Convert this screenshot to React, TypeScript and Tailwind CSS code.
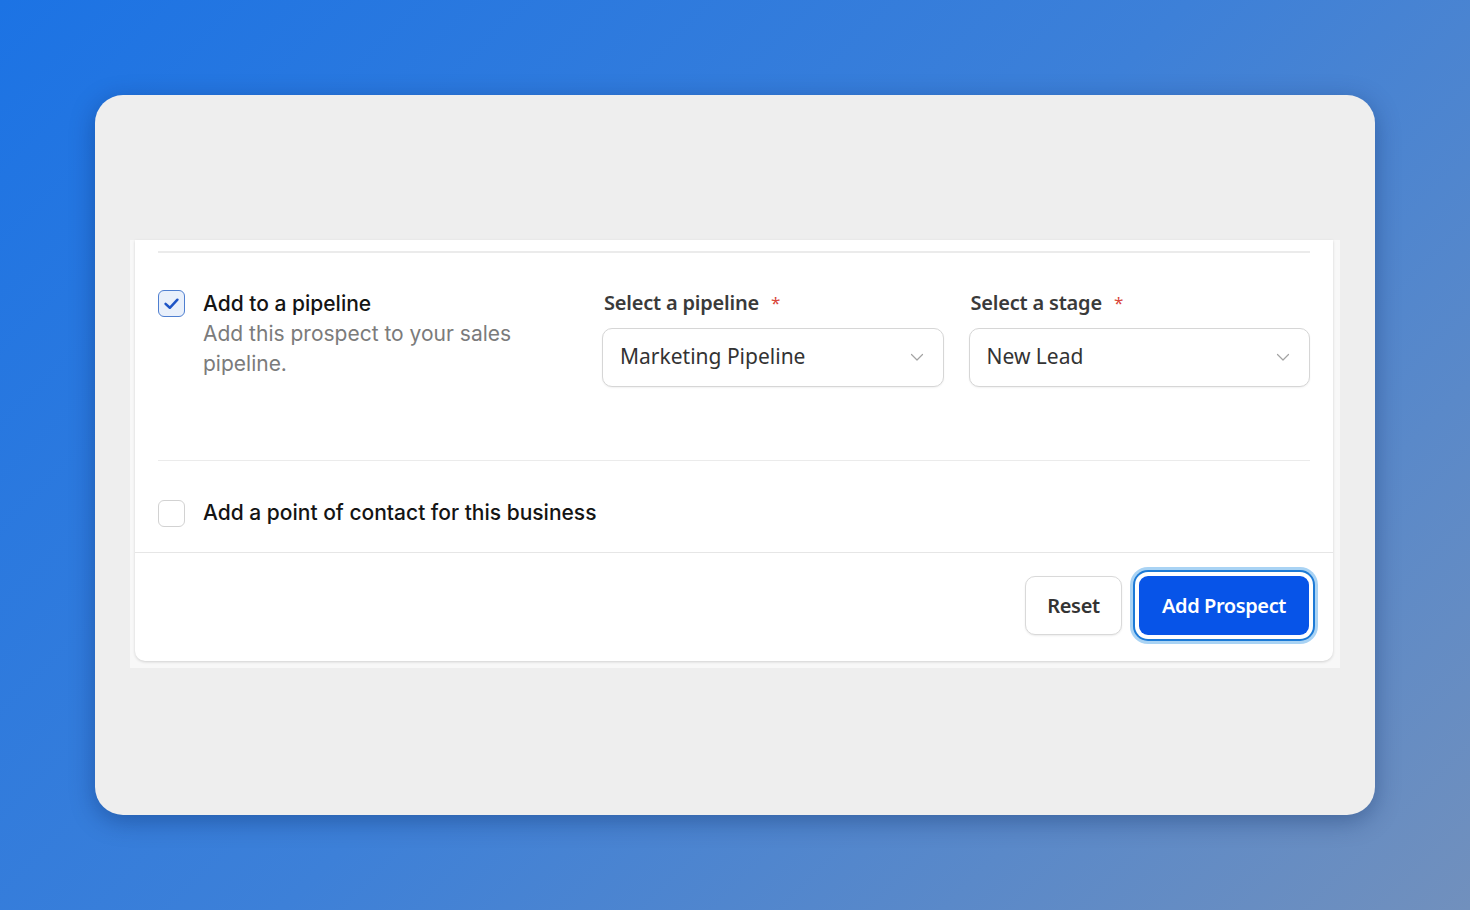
import React from "react";

function Chevron() {
  return (
    <svg width="16" height="16" viewBox="0 0 16 16" fill="none" className="shrink-0">
      <path d="M2.5 5.5 L8 11 L13.5 5.5" stroke="#a3a3a3" strokeWidth="1.2" strokeLinecap="round" strokeLinejoin="round" />
    </svg>
  );
}

function SelectField({ label, value }: { label: string; value: string }) {
  return (
    <div className="flex flex-col gap-[10px]">
      <div className="flex items-center h-[30px] pl-[2px] text-[20px] font-semibold text-[#3a3a3a] font-['Noto_Sans',sans-serif] tracking-[-0.2px]">
        <span>{label}</span>
        <span className="ml-[12px] text-[#d9473a] text-[17px] font-normal">*</span>
      </div>
      <div className="h-[59px] rounded-[10px] border-[1.5px] border-[#d6d6d6] bg-white shadow-[0_1px_2px_rgba(0,0,0,0.06)] flex items-center justify-between pl-[17px] pr-[18px]">
        <span className="text-[21px] text-[#333] font-['Noto_Sans',sans-serif]">{value}</span>
        <Chevron />
      </div>
    </div>
  );
}

export default function App() {
  return (
    <div className="w-[1470px] h-[910px] bg-[linear-gradient(135deg,#1c73e4_0%,#3d80d8_50%,#7190bd_100%)] p-[95px] font-['Inter',sans-serif]">
      <div className="w-full h-full rounded-[28px] bg-[#eeeeee] shadow-[0_6px_24px_rgba(0,30,80,0.35)] pt-[145px] px-[35px]">
        <div className="bg-[#f8f8f8] pl-[5px] pr-[7px] pb-[7px]">
          <div className="bg-white rounded-b-[10px] shadow-[0_1px_3px_rgba(0,0,0,0.16)]">
            <div className="px-[23px] pt-[11px]">
              <div className="h-[1.5px] bg-[#ebebeb]" />
              <div className="flex pt-[35px] pb-[73px]">
                <div className="w-[444px] flex gap-[18px] pt-[1px]">
                  <div className="mt-[1px] w-[27px] h-[27px] rounded-[6px] border-[1.5px] border-[#4f7fd0] bg-[#e9f0fb] flex items-center justify-center shrink-0">
                    <svg width="19" height="19" viewBox="0 0 16 16" fill="none">
                      <path d="M3 8.3 L6.6 11.6 L13 4.8" stroke="#1f55c6" strokeWidth="2.1" strokeLinecap="round" strokeLinejoin="round" />
                    </svg>
                  </div>
                  <div className="flex flex-col">
                    <span className="text-[21px] leading-[30px] font-medium text-[#141414]">Add to a pipeline</span>
                    <span className="text-[21px] leading-[30px] text-[#7b7b7b] w-[340px]">Add this prospect to your sales pipeline.</span>
                  </div>
                </div>
                <div className="flex-1 grid grid-cols-2 gap-[25px]">
                  <SelectField label="Select a pipeline" value="Marketing Pipeline" />
                  <SelectField label="Select a stage" value="New Lead" />
                </div>
              </div>
              <div className="h-[1.5px] bg-[#ebebeb]" />
              <div className="flex items-center gap-[18px] pt-[37px] pb-[24px]">
                <div className="w-[27px] h-[27px] rounded-[6px] border-[1.5px] border-[#d2d2d2] bg-white shrink-0" />
                <span className="text-[21px] leading-[30px] font-medium text-[#141414]">Add a point of contact for this business</span>
              </div>
            </div>
            <div className="h-[1px] bg-[#e6e6e6]" />
            <div className="flex justify-end items-center gap-[17px] pt-[23px] pb-[26px] pr-[24px]">
              <button className="h-[59px] w-[97px] rounded-[10px] border border-[#d9d9d9] bg-white shadow-[0_1px_2px_rgba(0,0,0,0.08)] text-[20px] font-semibold text-[#333] font-['Noto_Sans',sans-serif] tracking-[-0.3px]">
                Reset
              </button>
              <button className="h-[59px] w-[170px] rounded-[9px] bg-[#0754e8] text-white text-[20px] font-semibold font-['Noto_Sans',sans-serif] tracking-[-0.4px] shadow-[0_0_0_4px_#ffffff,0_0_0_6px_#1c7ad6,0_0_0_9px_#a9d3f4]">
                Add Prospect
              </button>
            </div>
          </div>
        </div>
      </div>
    </div>
  );
}
